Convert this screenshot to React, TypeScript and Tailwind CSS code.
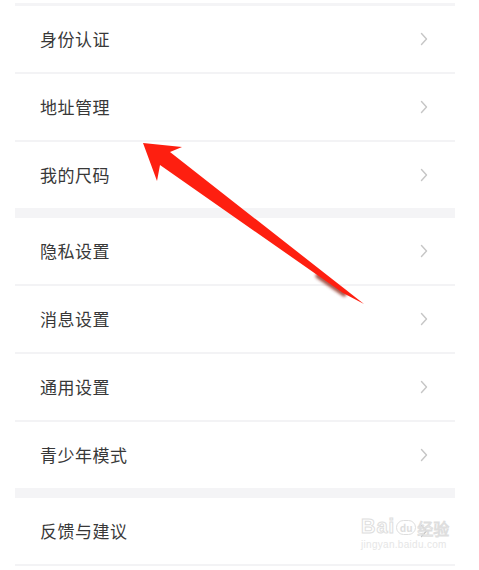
const groups: string[][] = [
  ['身份认证', '地址管理', '我的尺码'],
  ['隐私设置', '消息设置', '通用设置', '青少年模式'],
  ['反馈与建议'],
];

function Chevron() {
  return (
    <svg width="8" height="14" viewBox="0 0 8 14" fill="none">
      <path d="M1.5 1.5 L6.5 7 L1.5 12.5" stroke="#c6c6c6" strokeWidth="1.4" strokeLinecap="round" strokeLinejoin="round" />
    </svg>
  );
}

function Row({ label, last }: { label: string; last: boolean }) {
  return (
    <div
      className={
        'flex items-center justify-between pl-[25px] pr-[27px] ' +
        (last ? 'h-[66px]' : 'h-[68px] border-b-2 border-[#f3f3f5]')
      }
    >
      <span className="text-[17px] text-[#383838] tracking-[0.5px]">{label}</span>
      <Chevron />
    </div>
  );
}

function Arrow() {
  return (
    <svg className="absolute left-0 top-0 pointer-events-none" width="479" height="570" viewBox="0 0 479 570">
      <defs>
        <filter id="blur" x="-50%" y="-50%" width="200%" height="200%">
          <feGaussianBlur stdDeviation="1.6" />
        </filter>
      </defs>
      <path d="M318 276 L344 294" stroke="#8e2a1c" strokeWidth="5" strokeLinecap="round" filter="url(#blur)" opacity="0.8" />
      <polygon points="143,143 182,147 170,152 364,304 343,293 160,165 157,181" fill="#fe1f10" />
    </svg>
  );
}

function Watermark() {
  return (
    <div className="absolute left-[361px] top-[516px] flex flex-col items-start pointer-events-none leading-none">
      <div className="flex items-end">
        <span className="text-[20px] font-bold tracking-[1px] text-transparent [-webkit-text-stroke:1px_#dedede]" style={{ fontFamily: '"Liberation Sans", sans-serif' }}>
          Bai
        </span>
        <span className="mx-[1px] mb-[1px] flex h-[15px] w-[20px] items-center justify-center rounded-full border border-[#dedede] text-[10px] font-bold text-[#dedede]">
          du
        </span>
        <span className="text-[16px] text-transparent [-webkit-text-stroke:1px_#dedede]">经验</span>
      </div>
      <span className="mt-[4px] text-[10px] tracking-[0.3px] text-[#e6e6e6]" style={{ fontFamily: '"Liberation Sans", sans-serif' }}>
        jingyan.baidu.com
      </span>
    </div>
  );
}

export default function App() {
  return (
    <div
      className="relative w-[479px] h-[570px] overflow-hidden bg-white"
      style={{ fontFamily: '"Noto Sans CJK SC", "Noto Sans", sans-serif' }}
    >
      <div className="ml-[15px] w-[440px] pt-[3px]">
        <div className="h-[3px] bg-[#f4f4f6]" />
        {groups.map((items, gi) => (
          <div key={gi}>
            {gi > 0 && <div className="h-[10px] bg-[#f4f4f6]" />}
            {items.map((label, i) => (
              <Row key={label} label={label} last={i === items.length - 1 && gi < groups.length - 1} />
            ))}
          </div>
        ))}
      </div>
      <Watermark />
      <Arrow />
    </div>
  );
}
